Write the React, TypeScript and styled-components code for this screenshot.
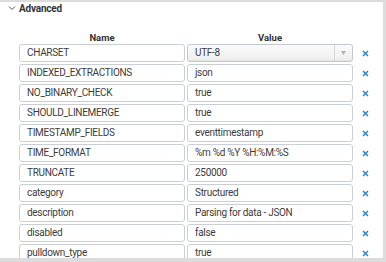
import styled, { createGlobalStyle } from "styled-components";

const Global = createGlobalStyle`
  html, body {
    margin: 0;
    padding: 0;
    background: #ffffff;
  }
  * {
    box-sizing: border-box;
  }
`;

// 바깥 프레임
const Frame = styled.div`
  width: 386px;
  height: 262px;
  overflow: hidden;
  background: #ffffff;
  border-top: 2px solid #dcdcdc;
  border-right: 3px solid #dcdcdc;
  border-bottom: 4px solid #dcdcdc;
  font-family: Roboto, "Liberation Sans", Arial, sans-serif;
  color: #333333;
`;

const Section = styled.div`
  padding: 1px 0 0 8px;
`;

const SectionTitle = styled.div`
  display: flex;
  align-items: center;
  gap: 3px;
  height: 10px;
  font-size: 10px;
  letter-spacing: -0.2px;
  font-weight: 700;
  color: #333333;
`;

const Grid = styled.div`
  display: grid;
  grid-template-columns: 166px 166px 26px;
  grid-template-rows: 8px;
  grid-auto-rows: 18px;
  column-gap: 2px;
  row-gap: 2px;
  margin: 21px 0 0 11px;
`;

const ColHead = styled.div`
  font-size: 9.5px;
  font-weight: 700;
  text-align: center;
  line-height: 8px;
  height: 8px;
  color: #333333;
`;

const Field = styled.div`
  height: 18px;
  border: 1px solid #c9cfd4;
  border-radius: 3px;
  background: #ffffff;
  font-size: 10px;
  letter-spacing: -0.3px;
  line-height: 16px;
  padding-left: 7px;
  color: #3c3c3c;
  white-space: nowrap;
  overflow: hidden;
`;

const Select = styled(Field)`
  border-color: #c3c9ce;
  background: linear-gradient(to bottom, #fbfbfb, #eeeeee);
  display: flex;
  justify-content: space-between;
  box-shadow: inset 0 -1px 0 rgba(0, 0, 0, 0.04);
`;

const Arrow = styled.span`
  width: 18px;
  height: 100%;
  border-left: 1px solid #d3d7da;
  display: flex;
  align-items: center;
  justify-content: center;
`;

const Remove = styled.div`
  display: flex;
  align-items: center;
  padding-left: 7px;
  height: 18px;
`;

const rows: [string, string][] = [
  ["CHARSET", "UTF-8"],
  ["INDEXED_EXTRACTIONS", "json"],
  ["NO_BINARY_CHECK", "true"],
  ["SHOULD_LINEMERGE", "true"],
  ["TIMESTAMP_FIELDS", "eventtimestamp"],
  ["TIME_FORMAT", "%m %d %Y %H:%M:%S"],
  ["TRUNCATE", "250000"],
  ["category", "Structured"],
  ["description", "Parsing for data - JSON"],
  ["disabled", "false"],
  ["pulldown_type", "true"],
];

const Cross = () => (
  <svg width="7" height="7" viewBox="0 0 7 7">
    <path d="M1,1 L6,6 M1,6 L6,1" stroke="#2a7fc4" strokeWidth="1.4" />
  </svg>
);

const Row = ({ name, value, select }: { name: string; value: string; select: boolean }) => (
  <>
    <Field>{name}</Field>
    {select ? (
      <Select>
        {value}
        <Arrow>
          <svg width="5" height="4" viewBox="0 0 5 4">
            <path d="M0,0 L5,0 L2.5,4 Z" fill="#b0b0b0" />
          </svg>
        </Arrow>
      </Select>
    ) : (
      <Field>{value}</Field>
    )}
    <Remove>
      <Cross />
    </Remove>
  </>
);

export default function App() {
  return (
    <Frame>
      <Global />
      <Section>
        <SectionTitle>
          <svg width="8" height="6" viewBox="0 0 8 6">
            <path d="M1,1.5 L4,4.5 L7,1.5" stroke="#555" strokeWidth="1" fill="none" />
          </svg>
          Advanced
        </SectionTitle>
        <Grid>
          <ColHead>Name</ColHead>
          <ColHead>Value</ColHead>
          <div />
          {rows.map(([name, value], i) => (
            <Row key={name} name={name} value={value} select={i === 0} />
          ))}
        </Grid>
      </Section>
    </Frame>
  );
}
